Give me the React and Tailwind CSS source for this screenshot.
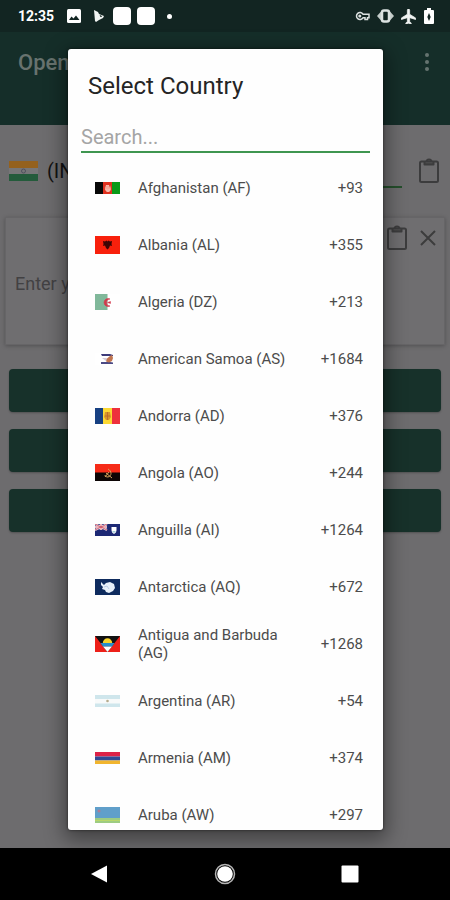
import React from "react";

const flagShapes = {
  AF: {
    h: 12,
    art: (
      <>
        <rect width="9" height="12" fill="#080808" />
        <rect x="8" width="9" height="12" fill="#e0301e" />
        <rect x="17" width="8" height="12" fill="#0a9a18" />
        <path d="M9 3c1 4 1 6 3 7h2c2-1 2-3 2-7l-1 4-1-4h-3l-1 4z" fill="#f7b9ab" />
        <circle cx="12.5" cy="5.5" r="2" fill="#f5a898" />
      </>
    ),
  },
  AL: {
    h: 18,
    art: (
      <>
        <rect width="25" height="18" fill="#f8200c" />
        <path d="M8 5l2 .5 1.500-1 1 1 1-1 1.500 1 2-.5-.5 3 .5 2-2-.5-1 2.500-1.500 1.500-1.500-1.500-1-2.500-2 .5.500-2z" fill="#3d0505" />
      </>
    ),
  },
  DZ: {
    h: 16,
    art: (
      <>
        <rect width="25" height="16" fill="#fff" />
        <rect width="12.5" height="16" fill="#80b89a" />
        <path d="M15 5a4 4 0 1 0 0 7a3.2 3.2 0 1 1 0-7z" fill="#d3394c" stroke="#d3394c" strokeWidth=".6" />
        <path d="M12.5 8.5l3-1v2z" fill="#d3394c" stroke="#d3394c" strokeWidth=".5" />
      </>
    ),
  },
  AS: {
    h: 12,
    art: (
      <>
        <rect width="25" height="12" fill="#fff" />
        <path d="M6 1h9l3 1v1H7z" fill="#3d3b7a" />
        <path d="M6 9h9l3 .5V11H6z" fill="#4b4a85" />
        <path d="M7 5h4l2 2-2 1z" fill="#d5c9d8" />
        <path d="M12 5.500l3-2.500 2-1 1 3-1 3-3 1.500-3-1z" fill="#c07550" />
      </>
    ),
  },
  AD: {
    h: 16,
    art: (
      <>
        <rect width="9" height="16" fill="#174082" />
        <rect x="8" width="9" height="16" fill="#fbd833" />
        <rect x="17" width="8" height="16" fill="#ee303c" />
        <path d="M10 4h5l1 5-2 3h-3l-2-3z" fill="#d7962b" />
        <path d="M12.500 4v8M10 8h5" stroke="#b8662a" strokeWidth=".8" />
      </>
    ),
  },
  AO: {
    h: 17,
    art: (
      <>
        <rect width="25" height="9" fill="#f62b18" />
        <rect y="8.500" width="25" height="8.500" fill="#0c0505" />
        <path d="M13 5c4 2 4 7 0 8-2 0-3-1-3-2M10 13l4-5M11 9l6 5" fill="none" stroke="#d6a35d" strokeWidth="1" />
      </>
    ),
  },
  AI: {
    h: 12,
    art: (
      <>
        <rect width="25" height="12" fill="#1c2874" />
        <path d="M0 0l12 6M12 0L0 6" stroke="#e9dce8" strokeWidth="2" />
        <path d="M6 0v6M0 3h12" stroke="#fff" strokeWidth="2.500" />
        <path d="M6 0v6M0 3h12M0 0l12 6M12 0L0 6" stroke="#ce5264" strokeWidth=".9" />
        <path d="M16.500 3h5v3c0 2-1 3-2.500 4-1.500-1-2.500-2-2.500-4z" fill="#fff" />
        <path d="M17 7h4l-2 2z" fill="#a1ced8" />
      </>
    ),
  },
  AQ: {
    h: 16,
    art: (
      <>
        <rect width="25" height="16" fill="#0e2b5e" />
        <path d="M6 3l3 3 2-2 4-1 4 2 1 4-2 3-4 2-3-1-1-2-3-1 1-2-2-2z" fill="#e8f1fa" />
        <path d="M9 8l3-1 2 3" fill="none" stroke="#a9bfdc" strokeWidth=".7" />
      </>
    ),
  },
  AG: {
    h: 16,
    art: (
      <>
        <rect width="25" height="16" fill="#ed2019" />
        <path d="M0 0h25L12.500 16z" fill="#111" />
        <path d="M7.800 7a4.700 4.700 0 0 1 9.400 0z" fill="#f8d329" />
        <path d="M5.500 7h14l-2.400 3.500h-9.200z" fill="#278eca" />
        <path d="M8 10.500h9L12.500 16z" fill="#fff" />
      </>
    ),
  },
  AR: {
    h: 12,
    art: (
      <>
        <rect width="25" height="12" fill="#cfe6ec" />
        <rect y="4" width="25" height="4.500" fill="#f8fafa" />
        <circle cx="12.500" cy="6" r="1.300" fill="#b5ac8d" />
      </>
    ),
  },
  AM: {
    h: 12,
    art: (
      <>
        <rect width="25" height="4.500" fill="#dc2147" />
        <rect y="4.500" width="25" height="4" fill="#304995" />
        <rect y="8.500" width="25" height="3.500" fill="#f1b52e" />
      </>
    ),
  },
  AW: {
    h: 16,
    art: (
      <>
        <rect width="25" height="16" fill="#609fca" />
        <rect y="11" width="25" height="5" fill="#9dcc82" />
        <path d="M0 13.500h25" stroke="#b8d769" />
        <path d="M4 2l.7 1.300L6 4l-1.300.7L4 6l-.7-1.300L2 4l1.300-.7z" fill="#b97891" />
      </>
    ),
  },
};

const countries = [
  ["Afghanistan", "AF", "+93"],
  ["Albania", "AL", "+355"],
  ["Algeria", "DZ", "+213"],
  ["American Samoa", "AS", "+1684"],
  ["Andorra", "AD", "+376"],
  ["Angola", "AO", "+244"],
  ["Anguilla", "AI", "+1264"],
  ["Antarctica", "AQ", "+672"],
  ["Antigua and Barbuda", "AG", "+1268"],
  ["Argentina", "AR", "+54"],
  ["Armenia", "AM", "+374"],
  ["Aruba", "AW", "+297"],
];

function Flag({ code }) {
  const { h, art } = flagShapes[code];
  return (
    <svg width="25" height={h} viewBox={`0 0 25 ${h}`} className="shrink-0" aria-hidden="true">
      {art}
    </svg>
  );
}

function Clipboard() {
  return (
    <svg width="22" height="26" viewBox="0 0 22 26" fill="none" stroke="#3c3c3d" strokeWidth="2" strokeLinejoin="round" aria-hidden="true">
      <rect x="2" y="3.500" width="18" height="20.500" rx="1.500" />
      <path d="M6.500 4v2.500h9V4" fill="#4a4a4b" />
      <path d="M8.500 4a2.500 2.500 0 0 1 5 0" />
    </svg>
  );
}

function StatusBar() {
  return (
    <div className="flex h-8 shrink-0 items-center bg-[#122522] pl-[18px] pr-4 text-white">
      <span className="w-12 text-sm font-bold leading-5">12:35</span>
      <svg width="14" height="14" viewBox="0 0 14 14" className="ml-px" aria-hidden="true">
        <rect width="14" height="14" rx="1.500" fill="#fff" />
        <path d="M2 11l2.500-3.500 2 2L9 6.500l3.500 4.500z" fill="#122522" />
      </svg>
      <svg width="12" height="14" viewBox="0 0 12 14" className="ml-3" aria-hidden="true">
        <path d="M1 1l4 2 1 2 5 2-1 2-4 2-3 2-1-1z" fill="#f1f4f3" />
        <path d="M7 6.500l1.500.5-.5 1z" fill="#122522" stroke="#122522" strokeWidth=".6" />
      </svg>
      <div className="ml-2 flex gap-[6px]">
        <span className="size-[18px] rounded-[4px] bg-white" />
        <span className="size-[18px] rounded-[4px] bg-white" />
      </div>
      <span className="ml-3 size-[5px] rounded-full bg-white" />
      <div className="ml-auto flex items-center gap-[7px]">
        <svg width="15" height="10" viewBox="0 0 15 10" fill="none" stroke="#dce2e1" strokeWidth="1.500" aria-hidden="true">
          <path d="M8 3.200a3.500 3.500 0 1 0 0 3.600h2v1.700h2.500V6.800H14V3.200z" />
          <circle cx="4.800" cy="5" r=".8" />
        </svg>
        <svg width="17" height="14" viewBox="0 0 17 14" aria-hidden="true">
          <path d="M0 7l4-4.500v9zM17 7l-4-4.500v9z" fill="#c3cbc9" />
          <rect x="5" y="1.500" width="7" height="11" rx="2" fill="#122522" stroke="#dce2e1" strokeWidth="2.500" />
        </svg>
        <svg width="15" height="15" viewBox="2 2 19 20" fill="#f1f4f3" stroke="#f1f4f3" aria-hidden="true">
          <path d="M21 16v-2l-8-5V3.500C13 2.670 12.330 2 11.500 2S10 2.670 10 3.500V9l-8 5v2l8-2.500V19l-2 1.500V22l3.500-1 3.500 1v-1.500L13 19v-5.500l8 2.500z" />
        </svg>
        <svg width="10" height="16" viewBox="0 0 10 16" className="ml-px" aria-hidden="true">
          <path d="M3 0h4v2h2q1 0 1 1v12q0 1-1 1H1q-1 0-1-1V3q0-1 1-1h2z" fill="#fff" />
          <path d="M5 5l1.700 4-1.700 4-1.700-4z" fill="#122522" />
        </svg>
      </div>
    </div>
  );
}

function CountryDialog() {
  return (
    <div className="absolute inset-0 flex pb-[70px] pl-[68px] pr-[67px] pt-[49px]">
      <div
        role="dialog"
        aria-label="Select Country"
        className="flex min-w-0 flex-1 flex-col rounded-[3px] bg-[#fefefe] pb-1 shadow-[0_6px_20px_4px_rgba(0,0,0,0.4),0_0_3px_rgba(0,0,0,0.6)]"
      >
        <h2 className="px-5 pt-[21px] text-2xl leading-8 text-[#252525]">Select Country</h2>
        <input
          type="text"
          aria-label="Search"
          placeholder="Search..."
          className="mx-[13px] mt-4 h-[35px] border-b-2 border-[#3f9650] bg-transparent pt-1 text-xl text-[#252525] outline-none placeholder:text-[#a5a5a5]"
        />
        <ul className="mt-[6px] min-h-0 flex-1 overflow-hidden">
          {countries.map(([name, code, dial]) => (
            <li key={code}>
              <button type="button" className="flex h-[57px] w-full items-center pl-[27px] pr-5 text-left text-[15px] leading-[18px] text-[#4c4c4c]">
                <Flag code={code} />
                <span className="ml-[18px] w-[155px]">{`${name} (${code})`}</span>
                <span className="ml-auto">{dial}</span>
              </button>
            </li>
          ))}
        </ul>
      </div>
    </div>
  );
}

export default function App() {
  return (
    <div className="relative flex h-screen flex-col overflow-hidden bg-[#6d6c6e] font-['Roboto',sans-serif]">
      <StatusBar />
      <header className="flex h-[93px] shrink-0 items-start justify-between bg-[#152e29] pl-[18px] pr-[21px] pt-4">
        <h1 className="text-[22px] font-medium leading-[30px] text-[#68736f]">Open</h1>
        <button type="button" aria-label="More options" className="flex h-7 flex-col items-center justify-center gap-[3px]">
          <span className="size-1 rounded-full bg-[#65736f]" />
          <span className="size-1 rounded-full bg-[#65736f]" />
          <span className="size-1 rounded-full bg-[#65736f]" />
        </button>
      </header>
      <main className="flex-1">
        <div className="flex h-[92px] items-center pl-[9px] pr-[10px]">
          <svg width="29" height="20" viewBox="0 0 29 20" aria-hidden="true">
            <rect width="29" height="7" fill="#94611e" />
            <rect y="7" width="29" height="6" fill="#777678" />
            <rect y="13" width="29" height="7" fill="#245b3b" />
            <circle cx="14.500" cy="10" r="2" fill="none" stroke="#50515e" />
          </svg>
          <span className="ml-[9px] text-xl text-[#121212]">(IN)</span>
          <span className="mr-4 mt-8 h-[2px] flex-1 bg-[#254f2c]" />
          <button type="button" aria-label="Paste number">
            <Clipboard />
          </button>
        </div>
        <section className="mx-[5px] flex h-[128px] justify-end border border-[#666567] bg-[#6f6e70] pr-2 shadow-[0_1px_4px_rgba(0,0,0,0.25)]">
          <textarea
            aria-label="Message"
            placeholder="Enter your message"
            className="h-full min-w-0 flex-1 resize-none bg-transparent pl-[9px] pt-[54px] text-lg leading-6 outline-none placeholder:text-[#424143]"
          />
          <div className="flex h-10 items-center gap-3">
            <button type="button" aria-label="Paste message">
              <Clipboard />
            </button>
            <button type="button" aria-label="Clear message">
              <svg width="16" height="16" viewBox="0 0 16 16" stroke="#3c3c3d" strokeWidth="2" aria-hidden="true">
                <path d="M1 1l14 14M15 1L1 15" />
              </svg>
            </button>
          </div>
        </section>
        <div className="mx-[9px] mt-6 flex flex-col gap-[17px]">
          <button type="button" aria-label="Open chat" className="h-[43px] rounded-[4px] bg-[#17312a] shadow-[0_1px_2px_rgba(0,0,0,0.25)]" />
          <button type="button" aria-label="Share" className="h-[43px] rounded-[4px] bg-[#17312a] shadow-[0_1px_2px_rgba(0,0,0,0.25)]" />
          <button type="button" aria-label="Copy link" className="h-[43px] rounded-[4px] bg-[#17312a] shadow-[0_1px_2px_rgba(0,0,0,0.25)]" />
        </div>
      </main>
      <CountryDialog />
      <nav className="relative flex h-[52px] shrink-0 items-center justify-between bg-black px-[91px]">
        <button type="button" aria-label="Back">
          <svg width="17" height="18" viewBox="0 0 17 18" fill="#fff" aria-hidden="true">
            <path d="M0 9L16 .5v17z" />
          </svg>
        </button>
        <button type="button" aria-label="Home">
          <svg width="22" height="22" viewBox="0 0 22 22" aria-hidden="true">
            <circle cx="11" cy="11" r="9.500" fill="none" stroke="#b5b5b5" strokeWidth="1.500" />
            <circle cx="11" cy="11" r="7.800" fill="#fff" />
          </svg>
        </button>
        <button type="button" aria-label="Recent apps">
          <svg width="18" height="18" viewBox="0 0 18 18" aria-hidden="true">
            <rect x=".5" y=".5" width="17" height="17" rx="1" fill="#fff" />
          </svg>
        </button>
      </nav>
    </div>
  );
}
